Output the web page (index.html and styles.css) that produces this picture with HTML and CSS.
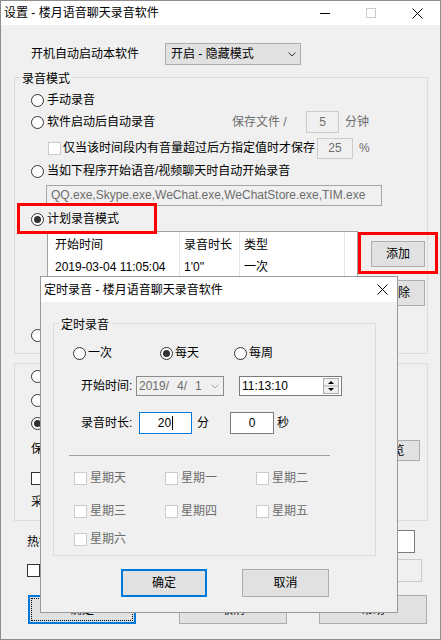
FILE: index.html
```html
<!DOCTYPE html>
<html lang="zh-CN">
<head>
<meta charset="utf-8">
<title>设置 - 楼月语音聊天录音软件</title>
<link rel="stylesheet" href="styles.css">
</head>
<body>
<div class="win">
  <div class="titlebar">
    <span class="title">设置 - 楼月语音聊天录音软件</span>
    <span class="cap"><svg width="10" height="10" viewBox="0 0 10 10"><line x1="0" y1="5.5" x2="10" y2="5.5" stroke="#000" stroke-width="1"/></svg></span>
    <span class="cap"><svg width="10" height="10" viewBox="0 0 10 10"><rect x="0.5" y="0.5" width="9" height="9" fill="none" stroke="#cccccc" stroke-width="1"/></svg></span>
    <span class="cap"><svg width="11" height="11" viewBox="0 0 11 11"><path d="M0.5 0.5L10.5 10.5M10.5 0.5L0.5 10.5" stroke="#000" stroke-width="1"/></svg></span>
  </div>
  <div class="content">
    <div class="row startup">
      <span class="lbl">开机自动启动本软件</span>
      <div class="combo"><span>开启 - 隐藏模式</span><svg width="8" height="5" viewBox="0 0 8 5"><path d="M0.5 0.5L4 4L7.5 0.5" fill="none" stroke="#333" stroke-width="1"/></svg></div>
    </div>

    <fieldset class="group g1">
      <legend>录音模式</legend>
      <div class="row r1"><span class="radio ind"></span><span class="rt">手动录音</span></div>
      <div class="row r2">
        <span class="radio ind"></span><span class="rt w185">软件启动后自动录音</span>
        <span class="gray w74">保存文件 /</span>
        <span class="edit dis e5">5</span>
        <span class="gray unit-min">分钟</span>
      </div>
      <div class="row r3">
        <span class="chk dis ind33"></span><span class="ct">仅当该时间段内有音量超过后方指定值时才保存</span>
        <span class="edit dis e25">25</span>
        <span class="gray pct">%</span>
      </div>
      <div class="row r4"><span class="radio ind"></span><span class="rt">当如下程序开始语音/视频聊天时自动开始录音</span></div>
      <div class="qq">QQ.exe,Skype.exe,WeChat.exe,WeChatStore.exe,TIM.exe</div>
      <div class="row r5"><span class="radio on ind"></span><span class="rt">计划录音模式</span></div>
      <div class="listrow">
        <div class="list">
          <div class="lrow head"><span class="c c1">开始时间</span><span class="c c2">录音时长</span><span class="c c3">类型</span><span class="c c4"></span></div>
          <div class="lrow data"><span class="c c1">2019-03-04 11:05:04</span><span class="c c2">1'0''</span><span class="c c3">一次</span><span class="c c4"></span></div>
        </div>
        <div class="side">
          <div class="btn sbtn first">添加</div>
          <div class="btn sbtn second">删除</div>
        </div>
      </div>
      <div class="row r6"><span class="radio ind"></span></div>
    </fieldset>

    <div class="g2">
      <div class="row q1"><span class="radio ind"></span></div>
      <div class="row q2"><span class="radio ind"></span></div>
      <div class="row q3"><span class="radio on ind"></span></div>
      <div class="row q4"><span class="ind">保存目录:</span><div class="btn browse">浏览</div></div>
      <div class="row q5"><span class="chk ind"></span></div>
      <div class="row q6"><span class="ind">采样率:</span></div>
    </div>

    <div class="row hot"><span class="lead">热键设置:</span><div class="edit white hotedit"></div></div>
    <div class="row autosave"><span class="chk lead"></span><div class="edit dis upedit"></div></div>

    <div class="row mbtns">
      <div class="btn mbtn focus">确定</div>
      <div class="btn mbtn m2b">取消</div>
      <div class="btn mbtn m3b">帮助</div>
    </div>
  </div>

  <div class="mark mk1"></div>
  <div class="mark mk2"></div>

  <div class="dlg">
    <div class="dlg-title">
      <span class="title">定时录音 - 楼月语音聊天录音软件</span>
      <span class="dlg-close"><svg width="11" height="11" viewBox="0 0 11 11"><path d="M0.5 0.5L10.5 10.5M10.5 0.5L0.5 10.5" stroke="#000" stroke-width="1"/></svg></span>
    </div>
    <div class="dlg-body">
      <fieldset class="group g3">
        <legend>定时录音</legend>
        <div class="row freq">
          <span class="opt o1"><span class="radio"></span><span class="ot">一次</span></span>
          <span class="opt o2"><span class="radio on"></span><span class="ot">每天</span></span>
          <span class="opt o3"><span class="radio"></span><span class="ot">每周</span></span>
        </div>
        <div class="row start">
          <span class="dlabel">开始时间:</span>
          <div class="datebox"><span class="dt">2019/</span><span class="dt d2">4/</span><span class="dt d2">1</span><svg class="dchev" width="8" height="5" viewBox="0 0 8 5"><path d="M0.5 0.5L4 4L7.5 0.5" fill="none" stroke="#a8a8a8" stroke-width="1"/></svg></div>
          <div class="timebox"><span>11:13:10</span>
            <svg class="spin" width="16" height="16" viewBox="0 0 16 16">
              <rect x="0.5" y="0.5" width="15" height="15" fill="#f0f0f0" stroke="#adadad"/>
              <line x1="1" y1="8" x2="15" y2="8" stroke="#adadad"/>
              <polygon points="5,6 8,3 11,6" fill="#000"/>
              <polygon points="5,10 8,13 11,10" fill="#000"/>
            </svg>
          </div>
        </div>
        <div class="row dur">
          <span class="dlabel l2">录音时长:</span>
          <div class="edit focusedit">20<span class="caret"></span></div>
          <span class="unit1">分</span>
          <div class="edit white sec">0</div>
          <span class="unit2">秒</span>
        </div>
        <div class="sep"></div>
        <div class="wk wk1">
          <span class="wc"><span class="chk dis"></span><span class="wt">星期天</span></span>
          <span class="wc"><span class="chk dis"></span><span class="wt">星期一</span></span>
          <span class="wc"><span class="chk dis"></span><span class="wt">星期二</span></span>
        </div>
        <div class="wk wk2">
          <span class="wc"><span class="chk dis"></span><span class="wt">星期三</span></span>
          <span class="wc"><span class="chk dis"></span><span class="wt">星期四</span></span>
          <span class="wc"><span class="chk dis"></span><span class="wt">星期五</span></span>
        </div>
        <div class="wk wk3">
          <span class="wc"><span class="chk dis"></span><span class="wt">星期六</span></span>
        </div>
      </fieldset>
      <div class="dlg-btns">
        <div class="btn dbtn primary">确定</div>
        <div class="btn dbtn cancel">取消</div>
      </div>
    </div>
  </div>
</div>
</body>
</html>
```
FILE: styles.css
```css
* { box-sizing: border-box; }
html, body { margin: 0; padding: 0; }
body {
  width: 441px; height: 640px; overflow: hidden;
  background: #f0f0f0;
  font-family: "Liberation Sans", "Noto Sans CJK SC", sans-serif;
  font-size: 12px; line-height: 16px; color: #000;
}
.win {
  position: relative; width: 441px; height: 640px;
  border: 1px solid #8e8e8e; background: #f0f0f0;
  display: flex; flex-direction: column; overflow: hidden;
}
.titlebar { flex: none; height: 24px; background: #fff; display: flex; align-items: center; }
.title { flex: 1; padding-left: 3px; white-space: nowrap; }
.cap { width: 46px; height: 24px; display: flex; align-items: center; justify-content: center; }

.content { flex: 1; display: flex; flex-direction: column; align-items: flex-start; }
.row { display: flex; align-items: center; height: 22px; flex: none; white-space: nowrap; }

.startup { margin-top: 18px; }
.startup .lbl { margin-left: 30px; width: 134px; }
.combo {
  width: 136px; height: 22px; border: 1px solid #adadad; background: #e1e1e1;
  display: flex; align-items: center; justify-content: space-between; padding: 0 4px 0 5px;
}

.group { border: 1px solid #dcdcdc; margin: 0; padding: 0; min-width: 0; }
.group legend { margin-left: 5px; padding: 4px 2px 0; line-height: 14px; white-space: nowrap; }
.g1 { margin: 3px 0 0 13px; width: 414px; padding-bottom: 7px; }

.radio {
  flex: none; display: inline-block; width: 13px; height: 13px;
  border: 1px solid #333; border-radius: 50%; background: #fff;
}
.radio.on::after {
  content: ""; display: block; width: 7px; height: 7px; margin: 2px;
  border-radius: 50%; background: #333;
}
.chk { flex: none; display: inline-block; width: 13px; height: 13px; border: 1px solid #333; background: #fff; }
.chk.dis { border-color: #cccccc; }
.ind { margin-left: 16px; }
.ind33 { margin-left: 33px; }
.rt { margin-left: 3px; }
.ct { margin-left: 2px; }
.gray { color: #6d6d6d; }

.r1 { margin-top: 3px; }
.w185 { width: 185px; }
.w74 { width: 74px; }
.edit {
  flex: none; display: flex; align-items: center; justify-content: center;
  border: 1px solid #7a7a7a; background: #fff;
}
.edit.dis { border-color: #cccccc; background: #f0f0f0; color: #6d6d6d; }
.e5 { width: 33px; height: 22px; }
.unit-min { margin-left: 6px; }
.r3 { margin-top: 4px; }
.e25 { width: 36px; height: 21px; margin-left: 2px; }
.pct { margin-left: 6px; }
.r4 { margin-top: 1px; }
.qq {
  margin: 3px 0 0 31px; width: 336px; height: 21px;
  border: 1px solid #a5a5a5; background: #f0f0f0; color: #6d6d6d;
  padding-left: 4px; line-height: 19px; white-space: nowrap; overflow: hidden;
}
.r5 { margin-top: 2px; }

.listrow { display: flex; margin-top: 1px; height: 92px; }
.list { margin-left: 32px; width: 311px; height: 92px; border: 1px solid #a0a0a0; background: #fff; overflow: hidden; }
.lrow { display: flex; }
.lrow.head { height: 26px; }
.lrow.data { height: 18px; }
.c { display: flex; align-items: center; height: 100%; border-right: 1px solid #e5e5e5; padding-left: 4px; white-space: nowrap; }
.c1 { width: 132px; padding-left: 7px; }
.c2 { width: 60px; }
.c3 { width: 105px; }
.c4 { flex: 1; border-right: none; }
.side { margin-left: 13px; display: flex; flex-direction: column; }

.btn {
  position: relative; flex: none; display: flex; align-items: center; justify-content: center;
  border: 1px solid #adadad; background: #e1e1e1; white-space: nowrap;
}
.sbtn { width: 54px; height: 26px; }
.sbtn.first { margin-top: 10px; }
.sbtn.second { margin-top: 13px; }
.r6 { margin-top: 1px; }

.g2 { margin: 9px 0 0 13px; width: 414px; border: 1px solid #dcdcdc; padding: 1px 0 7px; }
.q2 { margin-top: 2px; }
.q3 { margin-top: 1px; }
.q4 { margin-top: 4px; width: 412px; }
.browse { width: 55px; height: 21px; margin-left: auto; margin-right: 7px; align-self: flex-start; margin-top: 2px; }
.q5 { margin-top: 7px; }
.q6 { margin-top: 2px; }

.hot { margin-top: 9px; height: 23px; width: 439px; }
.lead { margin-left: 26px; }
.hotedit { width: 114px; height: 23px; margin-left: auto; margin-right: 25px; }
.autosave { margin-top: 6px; height: 23px; width: 439px; }
.upedit { width: 120px; height: 23px; margin-left: auto; margin-right: 18px; }

.mbtns { margin-top: 13px; height: 29px; }
.mbtn { width: 108px; height: 29px; }
.mbtn.focus { margin-left: 27px; border: 2px solid #0078d7; }
.mbtn.focus::before { content: ""; position: absolute; inset: 1px; border: 1px dotted #000; }
.m2b { margin-left: 43px; }
.m3b { margin-left: 32px; }

.mark { position: absolute; border: 3px solid #ff0000; }
.mk1 { left: 16px; top: 202px; width: 140px; height: 31px; }
.mk2 { left: 357px; top: 231px; width: 80px; height: 42px; }

.dlg {
  position: absolute; left: 39px; top: 275px; width: 358px; height: 337px;
  border: 1px solid #999; background: #f0f0f0; display: flex; flex-direction: column;
}
.dlg-title { flex: none; height: 25px; background: #fff; display: flex; align-items: center; }
.dlg-close { width: 30px; height: 25px; display: flex; align-items: center; justify-content: center; }
.dlg-body { display: flex; flex-direction: column; align-items: flex-start; }
.g3 { margin: 12px 0 0 12px; width: 323px; padding-bottom: 6px; }
.freq { margin-top: 10px; }
.opt { display: flex; align-items: center; }
.ot { margin-left: 2px; }
.o1 { margin-left: 19px; width: 87px; }
.o2 { width: 74px; }
.start { margin-top: 12px; height: 20px; }
.dlabel { margin-left: 27px; width: 55px; }
.datebox {
  width: 88px; height: 20px; border: 1px solid #8c8c8c; background: #f0f0f0; color: #6d6d6d;
  display: flex; align-items: center; padding-left: 2px;
}
.dt.d2 { margin-left: 8px; }
.dchev { margin-left: auto; margin-right: 4px; }
.timebox {
  margin-left: 15px; width: 103px; height: 20px; border: 1px solid #7a7a7a; background: #fff;
  display: flex; align-items: center; padding-left: 2px;
}
.spin { margin-left: auto; margin-right: 2px; }
.dur { margin-top: 16px; }
.dlabel.l2 { width: 58px; }
.focusedit { width: 53px; height: 22px; border-color: #0078d7; }
.caret { display: inline-block; width: 1px; height: 14px; background: #000; margin-left: 1px; }
.unit1 { margin-left: 5px; }
.sec { width: 44px; height: 22px; margin-left: 21px; }
.unit2 { margin-left: 3px; }
.sep { margin: 21px 0 0 15px; width: 261px; height: 1px; background: #a0a0a0; }
.wk { display: flex; height: 20px; margin-left: 20px; }
.wk1 { margin-top: 12px; }
.wk2 { margin-top: 13px; }
.wk3 { margin-top: 8px; }
.wc { width: 91px; display: flex; align-items: center; white-space: nowrap; }
.wt { margin-left: 3px; color: #6d6d6d; }
.dlg-btns { display: flex; margin: 13px 0 0 80px; }
.dbtn { height: 28px; }
.dbtn.primary { width: 86px; border: 2px solid #0078d7; }
.dbtn.cancel { width: 87px; margin-left: 35px; }
```
